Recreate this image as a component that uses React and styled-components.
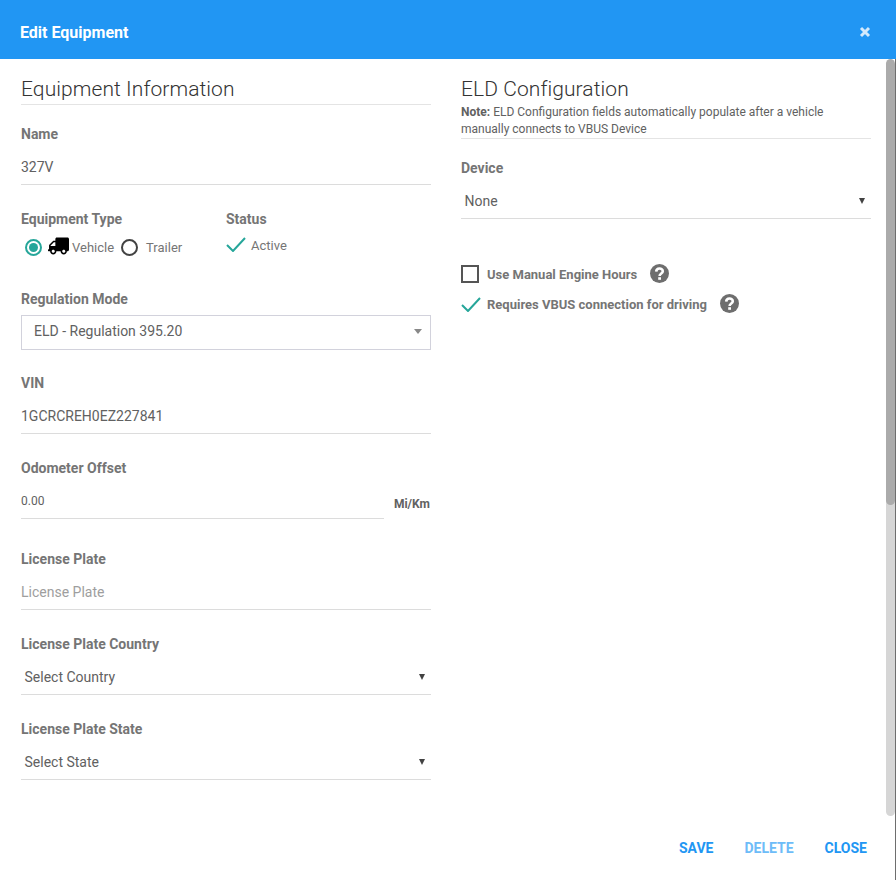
import React from 'react';
import styled, { createGlobalStyle } from 'styled-components';
import { FaTruck } from 'react-icons/fa';

const Global = createGlobalStyle`
  html, body { margin: 0; padding: 0; background: #fff; }
  body { font-family: Roboto, "Liberation Sans", sans-serif; }
  * { box-sizing: border-box; }
`;
const Dialog = styled.div`width: 896px; height: 880px; display: flex; flex-direction: column; overflow: hidden; background: #fff; position: relative;`;
const Header = styled.header`height: 59px; flex: none; background: #2196f3; display: flex; align-items: center; justify-content: space-between; padding: 6px 25px 0 20px;`;
const Title = styled.h1`margin: 0; font-size: 16px; font-weight: 700; color: #fff;`;
const CloseX = styled.svg`width: 12px; height: 12px; display: block; margin-top: -1px;`;
const Body = styled.main`flex: none; height: 757px; display: flex; position: relative;`;
const Columns = styled.div`flex: 1; display: grid; grid-template-columns: 410px 410px; column-gap: 30px; padding: 0 0 0 21px; align-content: start;`;
const Column = styled.section`display: flex; flex-direction: column; min-width: 0;`;
const Section = styled.h2`margin: 16px 0 0; height: 30px; font-size: 21px; font-weight: 300; letter-spacing: 0.08px; line-height: 29px; color: #333; white-space: nowrap; border-bottom: ${p => p.$plain ? 'none' : '1px solid #e4e4e4'};`;
const Note = styled.p`margin: -1px 0 0; height: 35px; font-size: 12px; line-height: 17px; color: #616161; border-bottom: 1px solid #e4e4e4;`;
const Label = styled.label`display: block; font-size: 14px; font-weight: 700; line-height: 18px; color: #757575;`;
const Field = styled.div`margin-top: ${p => p.$top}px;`;
const Input = styled.div`height: 42px; padding: 7px 6px 0 ${p => p.$pad || 0}px; display: flex; align-items: center; justify-content: space-between; font-size: 14px; color: ${p => p.$muted ? '#9e9e9e' : '#616161'}; border-bottom: 1px solid #dcdcdc;`;
const Caret = styled.span`width: 0; height: 0; border-left: 3.5px solid transparent; border-right: 3.5px solid transparent; border-top: 6px solid #424242;`;
const TypeRow = styled.div`display: flex; margin-top: 25px; height: 62px;`;
const TypeCol = styled.div`width: ${p => p.$w}px;`;
const Options = styled.div`display: flex; align-items: center; height: 22px; margin-top: 8px; padding-left: 4px; font-size: 13px; color: #757575;`;
const Radio = styled.span`width: 17px; height: 17px; border-radius: 50%; border: 2px solid ${p => p.$on ? '#26a69a' : '#424242'}; display: flex; align-items: center; justify-content: center; flex: none; margin-right: ${p => p.$mr}px;`;
const Dot = styled.span`width: 9px; height: 9px; border-radius: 50%; background: #26a69a;`;
const Truck = styled(FaTruck)`width: 21px; height: 18px; flex: none; margin-right: 3px; margin-top: -2px; color: #000; transform: scaleX(-1);`;
const Gap = styled.span`width: ${p => p.$w}px; flex: none;`;
const ActiveRow = styled.div`display: flex; align-items: center; gap: 5px; height: 22px; margin-top: 6px; font-size: 13px; color: #757575;`;
const Check = styled.svg`width: 20px; height: 16px; flex: none; margin-top: -3px;`;
const Select = styled.div`height: 35px; margin-top: 7px; border: 1px solid #d2d2dc; display: flex; align-items: center; justify-content: space-between; padding: 0 8px 3px 12px; font-size: 14px; color: #616161;`;
const GreyCaret = styled.span`width: 0; height: 0; border-left: 4px solid transparent; border-right: 4px solid transparent; border-top: 5px solid #888;`;
const OdoRow = styled.div`display: flex; align-items: flex-end; justify-content: space-between;`;
const OdoInput = styled.div`width: 363px; height: 42px; font-size: 12px; color: #616161; padding-top: 17px; line-height: 15px; border-bottom: 1px solid #dcdcdc;`;
const Unit = styled.span`font-size: 12px; font-weight: 700; color: #616161; margin: 0 1px 8px 0;`;
const CheckRow = styled.div`display: flex; align-items: center; height: 22px; font-size: 13px; font-weight: 700; color: #757575; margin-top: ${p => p.$top}px;`;
const Box = styled.span`width: 18px; height: 18px; border: 2px solid #555; flex: none; margin-right: 8px;`;
const RowCheck = styled(Check)`margin-right: 6px; margin-top: 0;`;
const Help = styled.svg`width: 19px; height: 19px; flex: none; margin: -1px 0 0 ${p => p.$ml}px;`;
const Track = styled.div`position: absolute; top: 0; right: 1px; width: 9px; height: 100%; border-radius: 5px; background: #d6d6d6; overflow: hidden;`;
const Thumb = styled.div`height: 446px; background: #ababab; border-radius: 5px;`;
const EdgeLine = styled.div`position: absolute; top: 59px; bottom: 0; right: 0; width: 1px; background: #6e6e6e;`;
const Footer = styled.footer`flex: 1; display: flex; justify-content: flex-end; align-items: flex-start; gap: 31px; padding: 23px 29px 0 0;`;
const Action = styled.button`border: 0; background: none; padding: 0; font: 700 14px Roboto, sans-serif; line-height: 18px; color: ${p => p.$dim ? '#6dbcf8' : '#2196f3'};`;

const CheckIcon = () => <path d="M1 9 L7 15 L19 2" fill="none" stroke="#26a69a" strokeWidth="2" />;
const HelpIcon = () => <>
  <circle cx="9.5" cy="9.5" r="9.5" fill="#6e6e6e" />
  <path d="M6.2 7.6 C6.3 3.6 12.8 3.6 12.8 7.2 C12.8 9.6 9.6 9.4 9.6 12" fill="none" stroke="#fff" strokeWidth="2.6" />
  <rect x="8.2" y="13.2" width="2.8" height="2.6" fill="#fff" />
</>;

export default function App() {
  return (
    <Dialog>
      <Global />
      <Header>
        <Title>Edit Equipment</Title>
        <CloseX viewBox="0 0 12 12"><path d="M2 2 L10 10 M10 2 L2 10" stroke="#d3e9fc" strokeWidth="3" /></CloseX>
      </Header>
      <Body>
        <Columns>
          <Column>
            <Section>Equipment Information</Section>
            <Field $top={20}>
              <Label>Name</Label>
              <Input>327V</Input>
            </Field>
            <TypeRow>
              <TypeCol $w={205}>
                <Label>Equipment Type</Label>
                <Options>
                  <Radio $on $mr={6}><Dot /></Radio>
                  <Truck />
                  Vehicle
                  <Gap $w={7} />
                  <Radio $mr={8} />
                  Trailer
                </Options>
              </TypeCol>
              <TypeCol $w={120}>
                <Label>Status</Label>
                <ActiveRow>
                  <Check viewBox="0 0 20 16"><CheckIcon /></Check>
                  Active
                </ActiveRow>
              </TypeCol>
            </TypeRow>
            <Field $top={18}>
              <Label>Regulation Mode</Label>
              <Select>ELD - Regulation 395.20<GreyCaret /></Select>
            </Field>
            <Field $top={24}>
              <Label>VIN</Label>
              <Input>1GCRCREH0EZ227841</Input>
            </Field>
            <Field $top={25}>
              <Label>Odometer Offset</Label>
              <OdoRow>
                <OdoInput>0.00</OdoInput>
                <Unit>Mi/Km</Unit>
              </OdoRow>
            </Field>
            <Field $top={31}>
              <Label>License Plate</Label>
              <Input $muted>License Plate</Input>
            </Field>
            <Field $top={25}>
              <Label>License Plate Country</Label>
              <Input $pad={3.5}>Select Country<Caret /></Input>
            </Field>
            <Field $top={25}>
              <Label>License Plate State</Label>
              <Input $pad={3.5}>Select State<Caret /></Input>
            </Field>
          </Column>
          <Column>
            <Section $plain>ELD Configuration</Section>
            <Note><b>Note:</b> ELD Configuration fields automatically populate after a vehicle manually connects to VBUS Device</Note>
            <Field $top={20}>
              <Label>Device</Label>
              <Input $pad={3.5}>None<Caret /></Input>
            </Field>
            <CheckRow $top={44}>
              <Box />Use Manual Engine Hours
              <Help $ml={13} viewBox="0 0 19 19"><HelpIcon /></Help>
            </CheckRow>
            <CheckRow $top={8}>
              <RowCheck viewBox="0 0 20 16"><CheckIcon /></RowCheck>Requires VBUS connection for driving
              <Help $ml={13} viewBox="0 0 19 19"><HelpIcon /></Help>
            </CheckRow>
          </Column>
        </Columns>
        <Track><Thumb /></Track>
      </Body>
      <EdgeLine />
      <Footer>
        <Action>SAVE</Action>
        <Action $dim>DELETE</Action>
        <Action>CLOSE</Action>
      </Footer>
    </Dialog>
  );
}
